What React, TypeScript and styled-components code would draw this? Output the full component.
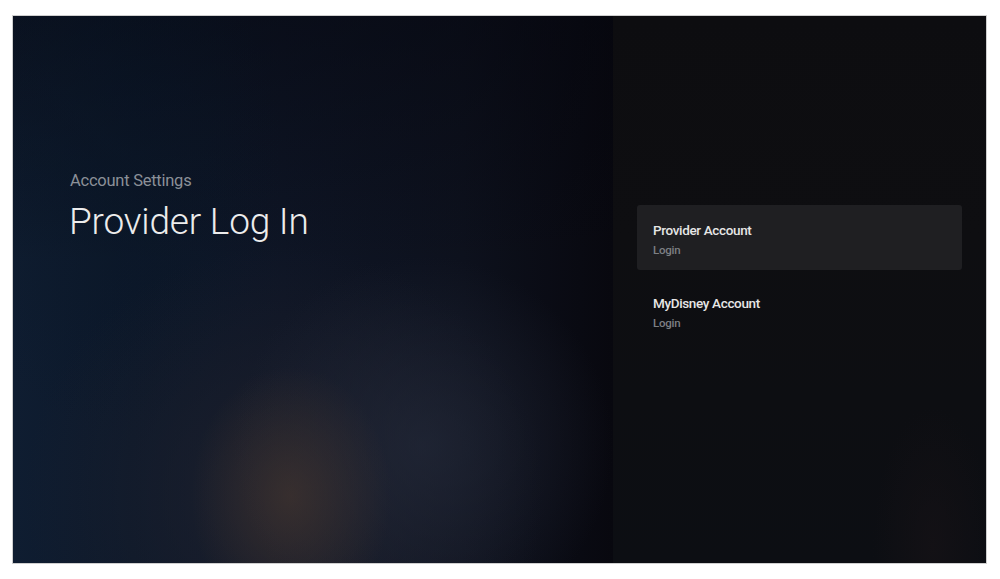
import styled, { createGlobalStyle } from "styled-components";

const GlobalStyle = createGlobalStyle`
  html, body {
    margin: 0;
    padding: 0;
    background: #ffffff;
  }
  body {
    font-family: Roboto, "Noto Sans", sans-serif;
  }
`;

const items = [
  { title: "Provider Account", sub: "Login", focused: true },
  { title: "MyDisney Account", sub: "Login", focused: false },
];

const App = () => {
  return (
    <>
      <GlobalStyle />
      <Page>
        <Screen>
          <Hero>
            <Breadcrumb>Account Settings</Breadcrumb>
            <Title>Provider Log In</Title>
          </Hero>
          <Side>
            <OptionList>
              {items.map((item) => (
                <Option key={item.title} focused={item.focused}>
                  <OptionTitle>{item.title}</OptionTitle>
                  <OptionSub>{item.sub}</OptionSub>
                </Option>
              ))}
            </OptionList>
          </Side>
        </Screen>
      </Page>
    </>
  );
};

export default App;

const Page = styled.div`
  width: 1000px;
  height: 579px;
  padding: 15px 0 0 12px;
  box-sizing: border-box;
`;

const Screen = styled.div`
  width: 975px;
  height: 549px;
  box-sizing: border-box;
  border: 1px solid #cfcfcf;
  display: flex;
  overflow: hidden;
`;

const Hero = styled.section`
  width: 600px;
  flex-shrink: 0;
  box-sizing: border-box;
  padding: 155px 0 0 57px;
  background:
    radial-gradient(ellipse 100px 130px at 278px 480px, rgba(66, 52, 46, 0.7), rgba(60, 48, 44, 0) 100%),
    radial-gradient(ellipse 190px 190px at 410px 430px, rgba(36, 42, 58, 0.65), rgba(38, 44, 60, 0) 100%),
    radial-gradient(ellipse 260px 250px at 270px 480px, rgba(32, 34, 46, 0.8), rgba(34, 36, 48, 0) 100%),
    radial-gradient(ellipse 170px 260px at 100px 160px, rgba(10, 22, 38, 0.5), rgba(8, 20, 36, 0) 100%),
    linear-gradient(180deg, rgba(5, 6, 14, 0.5) 0%, rgba(5, 6, 14, 0) 45%),
    linear-gradient(90deg, #0f1d31 0%, #0c182a 20%, #0e1525 45%, #0d111d 75%, #08080f 100%);
`;

const Breadcrumb = styled.div`
  font-size: 16.5px;
  font-weight: 400;
  color: #8b9098;
  letter-spacing: -0.25px;
  line-height: 20px;
`;

const Title = styled.h1`
  margin: 9px 0 0 -1px;
  font-size: 37px;
  font-weight: 300;
  color: #ececec;
  line-height: 44px;
  letter-spacing: -0.2px;
`;

const Side = styled.aside`
  flex: 1;
  box-sizing: border-box;
  padding: 189px 24px 0 24px;
  background:
    radial-gradient(ellipse 60px 140px at 320px 530px, rgba(22, 18, 22, 0.7), rgba(22, 18, 22, 0) 100%),
    linear-gradient(180deg, #0d0d10 0%, #0e0e11 40%, #0c0e13 100%);
`;

const OptionList = styled.ul`
  list-style: none;
  margin: 0;
  padding: 0;
  display: flex;
  flex-direction: column;
  gap: 8px;
`;

const Option = styled.li<{ focused: boolean }>`
  height: 65px;
  box-sizing: border-box;
  padding: 17px 16px 0;
  border-radius: 3px;
  background: ${(props) => (props.focused ? "#1f1f22" : "transparent")};
`;

const OptionTitle = styled.div`
  font-size: 13.5px;
  font-weight: 500;
  color: #e6e6e6;
  line-height: 17px;
  letter-spacing: -0.35px;
`;

const OptionSub = styled.div`
  margin-top: 4px;
  font-size: 11.5px;
  font-weight: 500;
  color: #7d7f84;
  line-height: 14px;
  letter-spacing: -0.25px;
`;
